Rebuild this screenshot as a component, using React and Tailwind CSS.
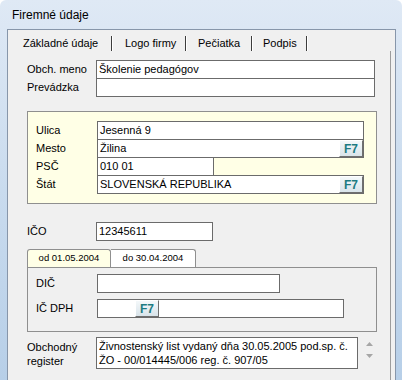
import React from "react";

const font = { fontFamily: '"Liberation Sans", Arial, sans-serif' };

function F7({ className = "" }) {
  return (
    <div
      className={
        "w-[24px] h-[17px] flex items-center justify-center border border-t-white border-l-white border-r-[#6f6f6f] border-b-[#6f6f6f] bg-gradient-to-b from-[#f4f8fa] to-[#d9e4ea] text-[12px] font-bold text-[#1d7b82] leading-none " +
        className
      }
    >
      F7
    </div>
  );
}

function Box({ w, children, className = "" }) {
  return (
    <div
      className={
        "h-[19px] bg-white border border-[#6b6b6b] flex items-center pl-[2px] text-[11px] text-black relative " +
        className
      }
      style={{ width: w }}
    >
      {children}
    </div>
  );
}

function Row({ label, labelW, children, className = "" }) {
  return (
    <div className={"flex items-center " + className}>
      <div className="text-[11px] text-black shrink-0" style={{ width: labelW }}>
        {label}
      </div>
      {children}
    </div>
  );
}

function Sep() {
  return (
    <div className="flex h-[15px] mt-[6px] shrink-0">
      <div className="w-px bg-[#3c3c3c]" />
      <div className="w-px bg-white" />
    </div>
  );
}

export default function App() {
  return (
    <div
      className="w-[402px] h-[380px] overflow-hidden flex flex-col bg-gradient-to-b from-[#dfe9f5] via-[#c9dbee] to-[#b7cfe8] rounded-t-[6px]"
      style={font}
    >
      {/* title bar */}
      <div className="h-[29px] shrink-0 pl-[12px] pt-[6px] text-[12px] text-black">
        Firemné údaje
      </div>

      {/* client */}
      <div className="ml-[7px] w-[389px] flex-1 flex flex-col border-t border-l border-r border-[#8796aa] bg-[#f0f0f0]">
        {/* tabs */}
        <div className="h-[21px] flex shrink-0 text-[11px] text-black">
          <div className="w-[103px] pl-[15px] pt-[5px]">Základné údaje</div>
          <Sep />
          <div className="w-[72px] pl-[12px] pt-[5px]">Logo firmy</div>
          <Sep />
          <div className="w-[64px] pl-[11px] pt-[5px]">Pečiatka</div>
          <Sep />
          <div className="w-[53px] pl-[10px] pt-[5px]">Podpis</div>
          <Sep />
        </div>

        {/* body */}
        <div className="flex-1 mr-[4px] border-r border-[#9c9c9c] pl-[19px] pt-[9px]">
          <Row label="Obch. meno" labelW={69}>
            <Box w={279}>Školenie pedagógov</Box>
          </Row>
          <Row label="Prevádzka" labelW={69} className="-mt-px">
            <Box w={279} />
          </Row>

          {/* address panel */}
          <div className="mt-[14px] w-[350px] h-[93px] border border-[#8f8f8f] bg-[#ffffe6] pl-[8px] pt-[9px]">
            <Row label="Ulica" labelW={61}>
              <Box w={267}>Jesenná 9</Box>
            </Row>
            <Row label="Mesto" labelW={61} className="-mt-px">
              <Box w={267}>
                Žilina
                <F7 className="absolute right-0 top-0" />
              </Box>
            </Row>
            <Row label="PSČ" labelW={61} className="-mt-px">
              <Box w={117}>010 01</Box>
            </Row>
            <Row label="Štát" labelW={61} className="-mt-px">
              <Box w={267}>
                SLOVENSKÁ REPUBLIKA
                <F7 className="absolute right-0 top-0" />
              </Box>
            </Row>
          </div>

          <Row label="IČO" labelW={69} className="mt-[18px]">
            <Box w={117}>12345611</Box>
          </Row>

          {/* DPH tabs */}
          <div className="mt-[8px] w-[350px]">
            <div className="flex h-[18px]">
              <div className="w-[84px] bg-[#ffffe6] border border-b-0 border-[#8f8f8f] rounded-t-[3px] text-[9.5px] flex items-center justify-center">
                od 01.05.2004
              </div>
              <div className="w-[85px] bg-white border border-l-0 border-b-0 border-[#8f8f8f] rounded-tr-[3px] text-[9.5px] flex items-center justify-center">
                do 30.04.2004
              </div>
            </div>
            <div className="h-[65px] border border-[#8f8f8f] pl-[8px] pt-[6px]">
              <Row label="DIČ" labelW={61}>
                <Box w={183} />
              </Row>
              <Row label="IČ DPH" labelW={61} className="mt-[6px]">
                <Box w={247}>
                  <F7 className="absolute left-[37px] top-0" />
                </Box>
              </Row>
            </div>
          </div>

          {/* register */}
          <div className="flex mt-[5px]">
            <div className="w-[69px] text-[11px] leading-[14px] pt-[3px] text-black">
              Obchodný
              <br />
              register
            </div>
            <div className="w-[262px] h-[32px] bg-white border border-[#6b6b6b] pl-[2px] pt-px text-[11px] leading-[14px] text-black whitespace-nowrap overflow-hidden">
              Živnostenský list vydaný dňa 30.05.2005 pod.sp. č.
              <br />
              ŽO - 00/014445/006 reg. č. 907/05
            </div>
            <div className="ml-[8px] flex flex-col items-center pt-[5px] gap-[8px]">
              <svg width="7" height="4" viewBox="0 0 7 4">
                <path d="M0 4 L3.5 0 L7 4 Z" fill="#a6a6a6" />
              </svg>
              <svg width="7" height="4" viewBox="0 0 7 4">
                <path d="M0 0 L3.5 4 L7 0 Z" fill="#a6a6a6" />
              </svg>
            </div>
          </div>
        </div>
      </div>
    </div>
  );
}
